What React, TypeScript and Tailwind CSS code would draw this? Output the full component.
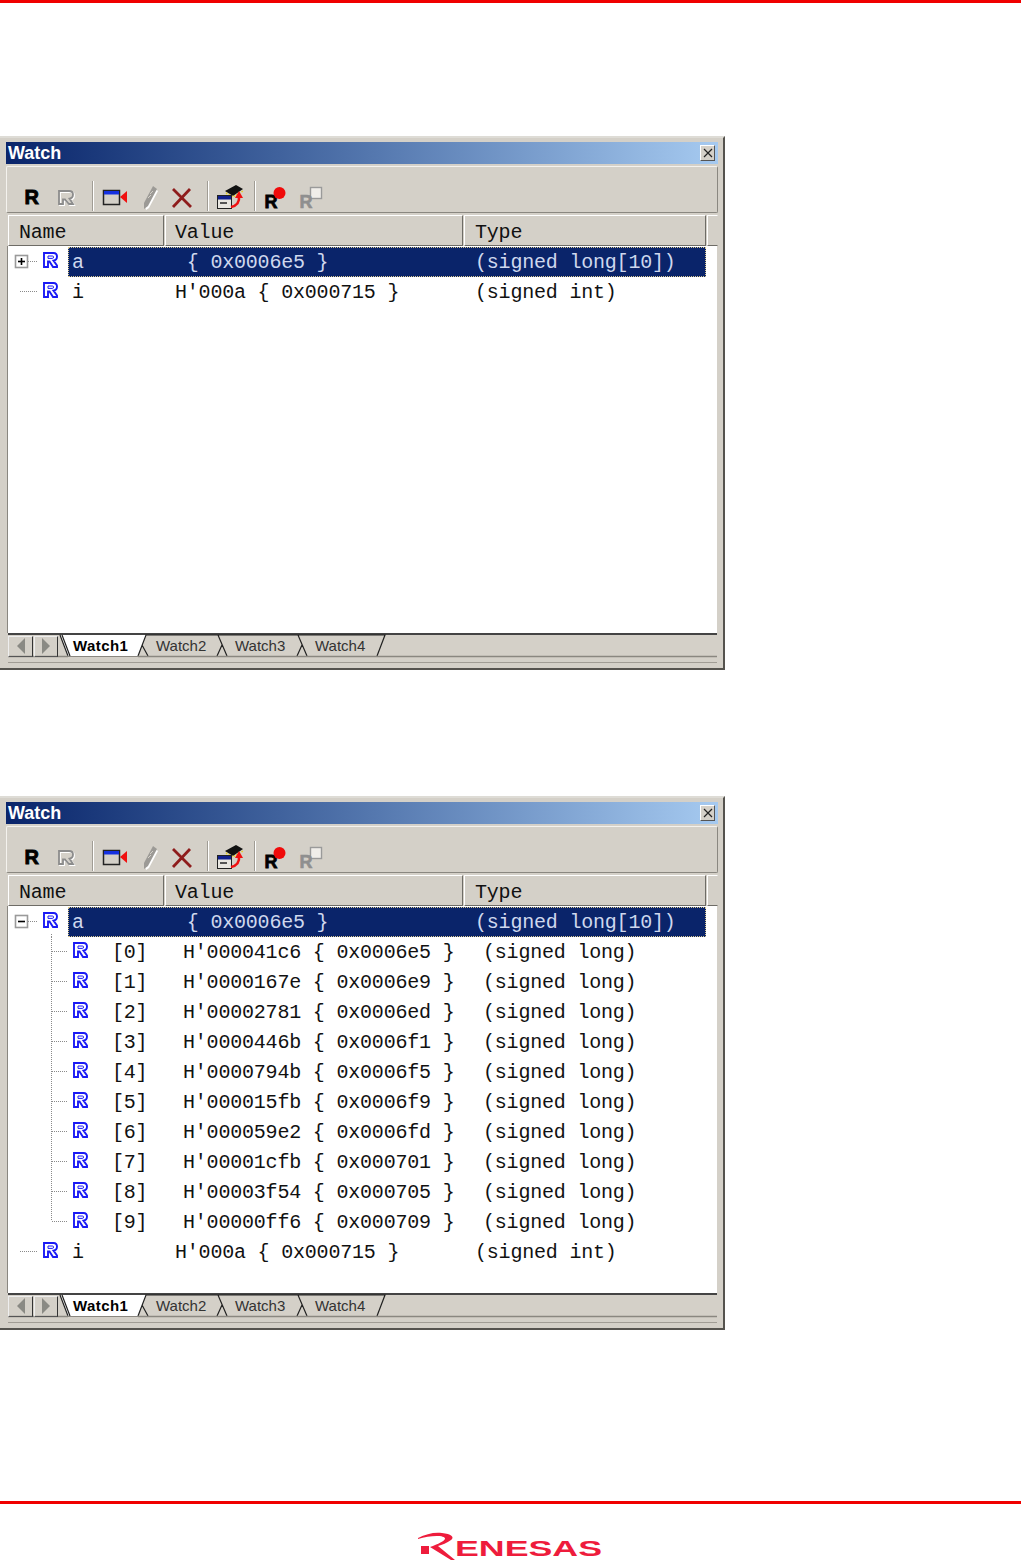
import React from "react";

const mono = "font-['Liberation_Mono',monospace]";

function BlueR({ x, y }: { x: number; y: number }) {
  return (
    <g transform={`translate(${x} ${y})`} fill="none" stroke="#1a1af5" strokeWidth="1.9">
      <path d="M1 1 H10.5 Q14 1 14 4.5 Q14 8 10.5 8.6 L14 13.5 V15 H10 L6.5 9.5 H5 V15 H1 Z" />
      <path d="M5 4 H9.5 Q10.5 4 10.5 5 Q10.5 6.4 9.5 6.4 H5 Z" strokeWidth="1" />
    </g>
  );
}

const DOT = { stroke: "#8a8a8a", strokeWidth: 1, strokeDasharray: "1 1", fill: "none" };

function PlusMinus({ plus }: { plus: boolean }) {
  return (
    <g>
      <rect x="7.5" y="8.5" width="12" height="12" fill="#fff" stroke="#9a9a9a" strokeWidth="1.6" />
      <path d="M10 14.5 H17" stroke="#000" strokeWidth="1.6" />
      {plus && <path d="M13.5 11 V18" stroke="#000" strokeWidth="1.6" />}
    </g>
  );
}

type Kind = "collapsed" | "open" | "leaf" | "child" | "last";

function Tree({ kind }: { kind: Kind }) {
  const child = kind === "child" || kind === "last";
  if (child) {
    return (
      <svg width="96" height="30" className="shrink-0">
        <path d={kind === "last" ? "M43.5 0 V14" : "M43.5 0 V30"} {...DOT} />
        <path d="M44 14.5 H60" {...DOT} />
        <BlueR x={65} y={5} />
      </svg>
    );
  }
  return (
    <svg width="60" height="30" className="shrink-0">
      {kind === "leaf" && <path d="M12 14.5 H30" {...DOT} />}
      {kind !== "leaf" && <path d="M20 14.5 H30" {...DOT} />}
      {kind === "open" && <path d="M43.5 27 V30" {...DOT} />}
      {kind !== "leaf" && <PlusMinus plus={kind === "collapsed"} />}
      <BlueR x={35} y={5} />
    </svg>
  );
}

function Row({ kind, name, value, type, selected }: { kind: Kind; name: string; value: string; type: string; selected?: boolean }) {
  const child = kind === "child" || kind === "last";
  return (
    <div className={`flex h-[30px] w-[698px] items-start text-[20px] tracking-[-0.2px] whitespace-pre ${mono}`}>
      <Tree kind={kind} />
      {selected ? (
        <div className="flex h-[30px] flex-1 items-start border border-dotted border-[#d8c890] bg-[#0a246a] pl-[3px] leading-[30px] text-[#cfd8ee]">
          <span className="w-[103px]">{name}</span>
          <span className="w-[300px]">{value}</span>
          <span>{type}</span>
        </div>
      ) : (
        <div className="flex flex-1 items-start leading-[32px] text-[#111]">
          <span className={child ? "ml-[8px] w-[71px]" : "ml-[4px] w-[103px]"}>{name}</span>
          <span className="w-[300px]">{value}</span>
          <span>{type}</span>
        </div>
      )}
    </div>
  );
}

function Sep({ ml }: { ml: string }) {
  return <div className={`h-[30px] w-[2px] shrink-0 border-l border-r border-l-[#a09c94] border-r-white ${ml}`} />;
}

function Toolbar() {
  const rText = "'Liberation Sans',sans-serif";
  return (
    <div className="flex h-[47px] items-start rounded-[2px] border border-t-[#f4f2ee] border-l-[#f4f2ee] border-r-[#8a8780] border-b-[#8a8780] pt-[14px]">
      <svg width="18" height="30" className="ml-[17px] shrink-0">
        <text x="0.5" y="23" fontFamily={rText} fontWeight="700" fontSize="20" fill="#000" stroke="#000" strokeWidth="0.9">R</text>
      </svg>
      <svg width="20" height="30" className="ml-[15px] shrink-0">
        <g fill="none" strokeWidth="1.8">
          <path transform="translate(2 10)" stroke="#fff" d="M1 1 H11 Q15 1 15 4.5 Q15 8 11.5 8.6 L15 14 H11 L7 9.5 H5 V14 H1 Z" />
          <path transform="translate(1 9)" stroke="#8c8c8c" d="M1 1 H11 Q15 1 15 4.5 Q15 8 11.5 8.6 L15 14 H11 L7 9.5 H5 V14 H1 Z" />
        </g>
      </svg>
      <Sep ml="ml-[15px]" />
      <svg width="26" height="30" className="ml-[8px] shrink-0">
        <rect x="1.5" y="9.5" width="16" height="14" fill="#d4d0c8" stroke="#222" strokeWidth="1.5" />
        <rect x="2" y="10" width="15" height="3.5" fill="#1430e0" />
        <path d="M25 10 V22 L18 16 Z" fill="#f01010" />
      </svg>
      <svg width="18" height="30" className="ml-[13px] shrink-0">
        <path d="M12 6 L16 9 L7 26 L4 28 L3 23 Z" fill="#fff" transform="translate(1 1)" />
        <path d="M12 5 L16 8 L7 25 L3 28 L3 22 Z" fill="#9c9a96" />
        <path d="M7 17 L10 14 M9 13 L12 10" stroke="#d4d0c8" strokeWidth="1" />
      </svg>
      <svg width="24" height="30" className="ml-[11px] shrink-0">
        <path d="M3 8 L21 26 M20 8 L3 26" stroke="#8e1c1c" strokeWidth="2.8" fill="none" />
      </svg>
      <Sep ml="ml-[13px]" />
      <svg width="28" height="30" className="ml-[7px] shrink-0">
        <path d="M9 10 L20 4 L27 8 L17 15 Z" fill="#111" />
        <path d="M10 12 L17 16 L27 10" stroke="#e8d020" strokeWidth="1.6" strokeDasharray="1.5 1.5" fill="none" />
        <rect x="1.5" y="14.5" width="14" height="13" fill="#e8e6e0" stroke="#222" />
        <rect x="2" y="15" width="13" height="3.5" fill="#10208c" />
        <path d="M4 22 H11" stroke="#555" strokeWidth="2" />
        <path d="M23 15 Q24 24 15 26" stroke="#f01010" strokeWidth="2.6" fill="none" />
        <path d="M19 17 L23 10 L27 17 Z" fill="#f01010" />
      </svg>
      <Sep ml="ml-[10px]" />
      <svg width="24" height="30" className="ml-[8px] shrink-0">
        <text x="0.5" y="27" fontFamily={rText} fontWeight="700" fontSize="18" fill="#000" stroke="#000" strokeWidth="0.8">R</text>
        <circle cx="15.5" cy="12" r="6" fill="#f00a0a" />
      </svg>
      <svg width="24" height="30" className="ml-[11px] shrink-0">
        <rect x="11.5" y="6.5" width="11" height="11" fill="#f0eeea" stroke="#9a9a9a" strokeWidth="1.4" />
        <text x="0.5" y="27" fontFamily={rText} fontWeight="700" fontSize="18" fill="#8f8f8f" stroke="#8f8f8f" strokeWidth="0.6">R</text>
      </svg>
    </div>
  );
}

function Header() {
  const cell = "flex h-[31px] items-end shrink-0 border border-t-white border-l-white border-r-[#6e6c66] border-b-[#6e6c66] text-[20px] tracking-[-0.2px] leading-[24px] text-[#111] " + mono;
  return (
    <div className="ml-[2px] flex h-[31px] gap-px">
      <div className={`${cell} w-[156px] pl-[10px]`}>Name</div>
      <div className={`${cell} w-[298px] pl-[9px]`}>Value</div>
      <div className={`${cell} w-[242px] pl-[10px]`}>Type</div>
      <div className={`${cell} w-[11px] border-r-[#d4d0c8]`} />
    </div>
  );
}

function Tabs() {
  const tab = "font-['Liberation_Sans',sans-serif] text-[15px] leading-[24px]";
  return (
    <div className="relative ml-[2px] flex h-[24px] w-[709px] items-center border-t-2 border-[#444] ">
      <svg width="717" height="25" className="absolute left-[-8px] top-[-2px]">
        <path d="M146 2 L138 23 H68 L60 2 Z" fill="#fff" />
        <path d="M60 2 L68 23 M62 2 L70 23 M138 23 L146 2 H218 L227 23 M142 12 L148 23 M222 12 L217 23 M218 2 H298 L307 23 M302 12 L297 23 M298 2 H385 L377 23" fill="none" stroke="#222" strokeWidth="1.2" />
        <path d="M8 23.5 H68 M138 23.5 H717" stroke="#8a8780" strokeWidth="1.4" />
        <path d="M68 23.5 H138" stroke="#8a8780" strokeWidth="1" />
      </svg>
      <div className="relative flex h-[21px] w-[25px] items-center justify-center border border-t-[#eee] border-l-[#eee] border-r-[#333] border-b-[#555]">
        <svg width="10" height="16"><path d="M9 0 V16 L1 8 Z" fill="#8a8a84" /></svg>
      </div>
      <div className="relative ml-px flex h-[21px] w-[24px] items-center justify-center border border-t-[#eee] border-l-[#eee] border-r-[#333] border-b-[#555]">
        <svg width="10" height="16"><path d="M1 0 V16 L9 8 Z" fill="#8a8a84" /></svg>
      </div>
      <span className={`relative ml-[15px] w-[83px] font-bold tracking-[0.4px] text-black ${tab}`}>Watch1</span>
      <span className={`relative w-[79px] text-[#333] ${tab}`}>Watch2</span>
      <span className={`relative w-[80px] text-[#333] ${tab}`}>Watch3</span>
      <span className={`relative text-[#333] ${tab}`}>Watch4</span>
    </div>
  );
}

function WatchWindow({ expanded }: { expanded?: boolean }) {
  const children = [
    ["[0]", "H'000041c6 { 0x0006e5 }"],
    ["[1]", "H'0000167e { 0x0006e9 }"],
    ["[2]", "H'00002781 { 0x0006ed }"],
    ["[3]", "H'0000446b { 0x0006f1 }"],
    ["[4]", "H'0000794b { 0x0006f5 }"],
    ["[5]", "H'000015fb { 0x0006f9 }"],
    ["[6]", "H'000059e2 { 0x0006fd }"],
    ["[7]", "H'00001cfb { 0x000701 }"],
    ["[8]", "H'00003f54 { 0x000705 }"],
    ["[9]", "H'00000ff6 { 0x000709 }"],
  ];
  return (
    <div className="h-[534px] w-[725px] border-t-2 border-r-2 border-b-2 border-t-[#dedcd6] border-r-[#55534e] border-b-[#55534e] bg-[#d4d0c8] pt-[4px] pr-[5px] pl-[6px]">
      <div className="flex h-[22px] w-[712px] items-center justify-between bg-gradient-to-r from-[#0a246a] to-[#a6caf0] pr-[3px] pl-[2px]">
        <span className="font-['Liberation_Sans',sans-serif] text-[18px] font-bold leading-[22px] text-white">Watch</span>
        <div className="flex h-[16px] w-[15px] items-center justify-center border border-t-white border-l-white border-r-[#555] border-b-[#555] bg-[#d4d0c8]">
          <svg width="10" height="10"><path d="M1 1 L9 9 M9 1 L1 9" stroke="#222" strokeWidth="1.2" /></svg>
        </div>
      </div>
      <div className="mt-[2px]">
        <Toolbar />
      </div>
      <div className="mt-[2px]">
        <Header />
      </div>
      <div className="ml-[1px] h-[387px] w-[710px] border-l border-[#8a8780] bg-white pt-px">
        <Row kind={expanded ? "open" : "collapsed"} name="a" value=" { 0x0006e5 }" type="(signed long[10])" selected />
        {expanded &&
          children.map((c, i) => (
            <Row key={c[0]} kind={i === 9 ? "last" : "child"} name={c[0]} value={c[1]} type="(signed long)" />
          ))}
        <Row kind="leaf" name="i" value="H'000a { 0x000715 }" type="(signed int)" />
      </div>
      <Tabs />
      <div className="ml-[2px] mt-[5px] h-px w-[709px] bg-[#a09c94]" />
    </div>
  );
}

function Logo() {
  return (
    <svg width="186" height="30" viewBox="0 0 186 30" role="img" aria-label="Renesas">
      <rect x="3" y="14" width="8" height="8" fill="#ee1c3c" />
      <path
        d="M0 6 C8 2 16 0 24 1 C33 2 37 5 33 8 C29 11 24 13 20 14 L37 28 L33 28 L12 15 C20 12 27 9 27 6.5 C27 3 12 3 0 7 Z"
        fill="#ee1c3c"
      />
      <text x="37" y="24" fontFamily="'Liberation Sans',sans-serif" fontWeight="700" fontSize="22" fill="#ee1c3c" textLength="147" lengthAdjust="spacingAndGlyphs">ENESAS</text>
    </svg>
  );
}

export default function App() {
  return (
    <div className="h-[1562px] w-[1021px] overflow-hidden bg-white">
      <div className="h-[3px] bg-[#f00000]" />
      <div className="mt-[133px]">
        <WatchWindow />
      </div>
      <div className="mt-[126px]">
        <WatchWindow expanded />
      </div>
      <div className="mt-[171px] h-[3px] bg-[#f00000]" />
      <div className="mt-[28px] flex justify-center">
        <Logo />
      </div>
    </div>
  );
}
